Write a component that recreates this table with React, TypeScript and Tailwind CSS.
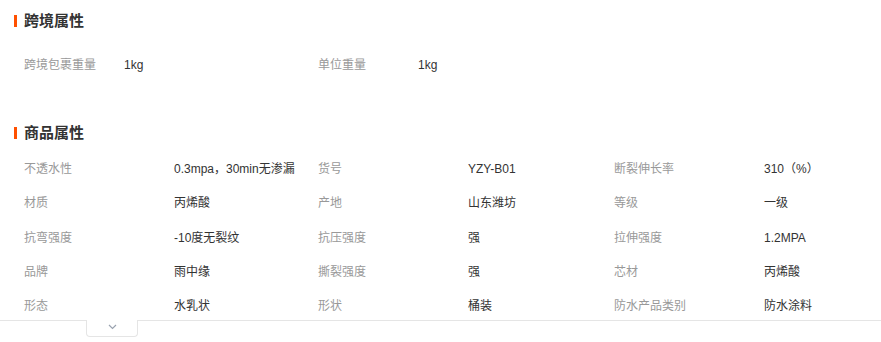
const crossBorder = [
  { label: '跨境包裹重量', value: '1kg' },
  { label: '单位重量', value: '1kg' },
];

const attrs = [
  { label: '不透水性', value: '0.3mpa，30min无渗漏' },
  { label: '货号', value: 'YZY-B01' },
  { label: '断裂伸长率', value: '310（%）' },
  { label: '材质', value: '丙烯酸' },
  { label: '产地', value: '山东潍坊' },
  { label: '等级', value: '一级' },
  { label: '抗弯强度', value: '-10度无裂纹' },
  { label: '抗压强度', value: '强' },
  { label: '拉伸强度', value: '1.2MPA' },
  { label: '品牌', value: '雨中缘' },
  { label: '撕裂强度', value: '强' },
  { label: '芯材', value: '丙烯酸' },
  { label: '形态', value: '水乳状' },
  { label: '形状', value: '桶装' },
  { label: '防水产品类别', value: '防水涂料' },
];

function SectionTitle({ title }: { title: string }) {
  return (
    <div className="flex h-[28px] items-center pl-[14px]">
      <span className="mr-[7px] h-[12px] w-[3px] bg-[#ff5000]" />
      <h2 className="text-[15px] font-bold text-[#333]">{title}</h2>
    </div>
  );
}

export default function App() {
  return (
    <div
      className="relative h-[342px] w-[881px] overflow-hidden bg-white"
      style={{ fontFamily: '"Liberation Sans", "Noto Sans CJK SC", sans-serif' }}
    >
      <div className="mt-[7px]">
        <SectionTitle title="跨境属性" />
      </div>
      <div className="mt-[13px] grid grid-cols-[294px_1fr] pl-[24px]">
        {crossBorder.map((item) => (
          <div key={item.label} className="flex h-[34px] items-center text-[12px]">
            <span className="w-[100px] text-[#999]">{item.label}</span>
            <span className="text-[#333]">{item.value}</span>
          </div>
        ))}
      </div>

      <div className="mt-[37px]">
        <SectionTitle title="商品属性" />
      </div>
      <div className="relative mt-[5px] h-[169px] border-b border-[#e5e5e5]">
        <div className="grid grid-cols-[294px_296px_1fr] pl-[24px]">
          {attrs.map((item) => (
            <div key={item.label} className="flex h-[34.3px] items-center text-[12px]">
              <span className="w-[150px] text-[#999]">{item.label}</span>
              <span className="text-[#333]">{item.value}</span>
            </div>
          ))}
        </div>
        <button className="absolute left-[86px] top-[168px] flex h-[17px] w-[52px] items-center justify-center rounded-b-[4px] border-x border-b border-[#e5e5e5] bg-white">
          <svg width="9" height="6" viewBox="0 0 9 6" className="mb-[2px]">
            <polyline points="1,1 4.5,4.5 8,1" fill="none" stroke="#9aa3b0" strokeWidth="1.2" />
          </svg>
        </button>
      </div>
    </div>
  );
}
